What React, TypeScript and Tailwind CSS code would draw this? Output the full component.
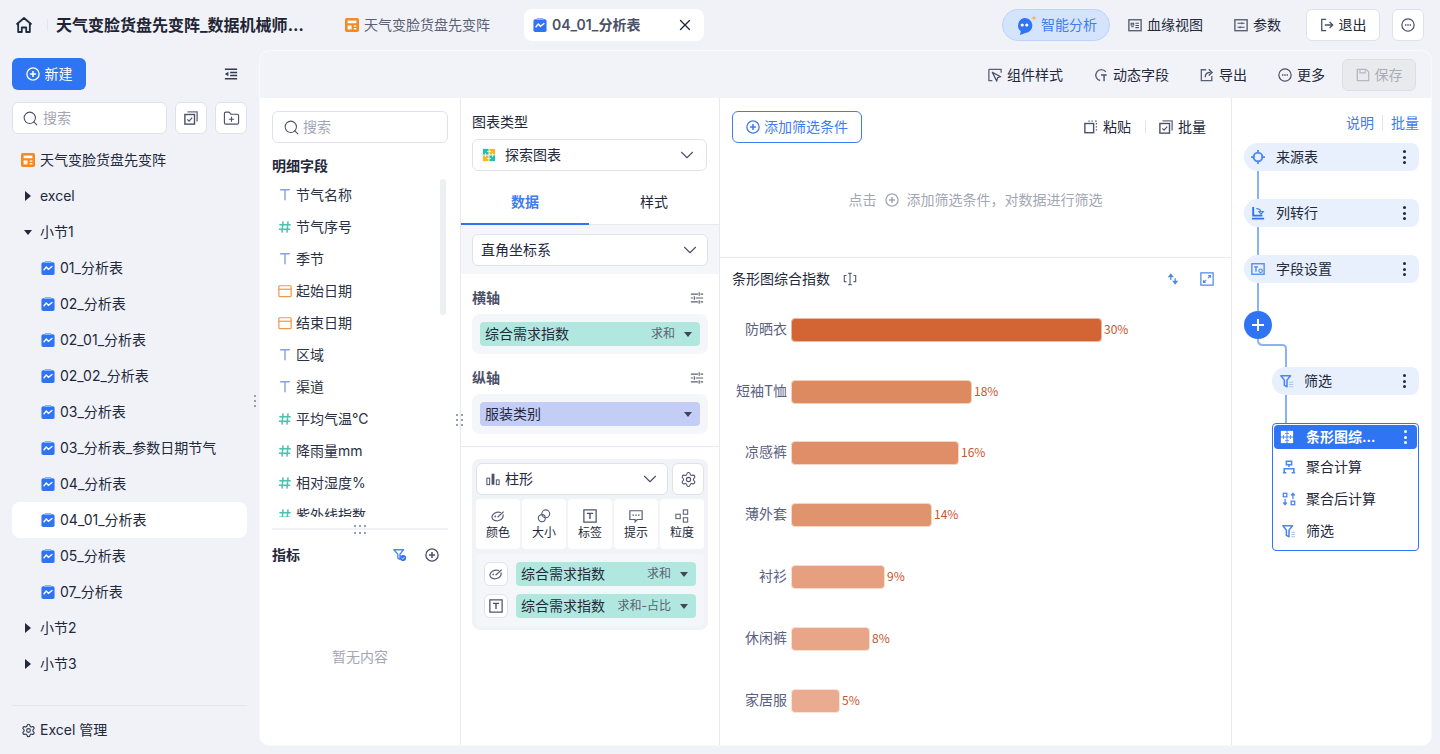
import type { ReactNode } from "react";
import { ChevronDown, FolderPlus, Search, Settings, X } from "lucide-react";

const GRAY = "#4b5168";
const BLUE = "#2f74f3";

function Ico({ size = 14, children }: { size?: number; children: ReactNode }) {
  return (
    <svg width={size} height={size} viewBox="0 0 16 16" fill="none" className="shrink-0">
      {children}
    </svg>
  );
}

function HomeIcon() {
  return (
    <svg width="18" height="18" viewBox="0 0 18 18" fill="none" className="shrink-0">
      <path d="M1.5 8.5 9 2l7.5 6.5M3.2 7.5V16h3.6v-4.5h4.4V16h3.6V7.5" stroke="#1f2a3d" strokeWidth="1.8" strokeLinejoin="round" />
    </svg>
  );
}

function BookIcon() {
  return (
    <Ico>
      <rect width="16" height="16" rx="2" fill="#f58a23" />
      <rect x="3" y="3" width="10" height="3" fill="#fff" />
      <rect x="3" y="8.500" width="4.500" height="4.500" fill="#fff" />
      <rect x="10" y="8.500" width="3" height="1.500" fill="#fff" />
      <rect x="10" y="11.500" width="3" height="1.500" fill="#fff" />
    </Ico>
  );
}

function SheetIcon() {
  return (
    <Ico>
      <rect x="0.5" y="1.5" width="15" height="14.5" rx="2" fill={BLUE} />
      <rect x="4" y="0" width="8" height="2.4" rx="1" fill="#8db4f8" />
      <path d="M3 10.5 6 7l2.5 2.5L13 6" stroke="#fff" strokeWidth="1.6" />
    </Ico>
  );
}

function CirclePlusIcon({ color = GRAY, size = 14 }: { color?: string; size?: number }) {
  return (
    <Ico size={size}>
      <circle cx="8" cy="8" r="7" stroke={color} strokeWidth="1.5" />
      <path d="M8 4.5v7M4.5 8h7" stroke={color} strokeWidth="1.8" />
    </Ico>
  );
}

function CircleMoreIcon() {
  return (
    <Ico>
      <circle cx="8" cy="8" r="7" stroke={GRAY} strokeWidth="1.4" />
      <path d="M4.6 8h1.6M7.2 8h1.6M9.8 8h1.6" stroke={GRAY} strokeWidth="1.6" />
    </Ico>
  );
}

function BatchIcon() {
  return (
    <Ico>
      <path d="M4 1h11v11" stroke="#6b7086" strokeWidth="1.6" />
      <rect x="1" y="4" width="11" height="11" stroke={GRAY} strokeWidth="1.6" />
      <path d="m3.8 9.5 2 2 3.6-4" stroke={GRAY} strokeWidth="1.3" />
    </Ico>
  );
}

function OutdentIcon() {
  return (
    <Ico>
      <path d="M1 2.5h14M7 6.2h8M7 9.8h8M1 13.5h14" stroke="#333b50" strokeWidth="1.8" />
      <path d="M1 8l4-2.6v5.2z" fill="#333b50" />
    </Ico>
  );
}

function TuneIcon() {
  return (
    <Ico>
      <path d="M1 3.5h8M12 3.5h3M1 8h2.500M6.500 8H15M1 12.500h8M12 12.500h3" stroke="#5b6074" strokeWidth="1.300" />
      <path d="M10.500 1.500v4M5 6v4M10.500 10.500v4" stroke="#5b6074" strokeWidth="1.300" />
    </Ico>
  );
}

function PanelIcon({ variant }: { variant: "lineage" | "param" }) {
  return (
    <Ico>
      <rect x="1" y="2" width="14" height="12.5" stroke="#5b6074" strokeWidth="1.6" />
      {variant === "lineage" ? (
        <path d="M3.5 6h3v2h-3zM3.5 10h3M8.5 6h4M8.5 8.5h4M8.5 11h4" stroke="#4b5168" strokeWidth="1.2" />
      ) : (
        <path d="M4 6h8M4 10.5h8M9 4.8v2.4M7 9.3v2.4" stroke="#4b5168" strokeWidth="1.2" />
      )}
    </Ico>
  );
}

function ExitIcon() {
  return (
    <Ico>
      <path d="M7 1.5H2v13h5" stroke={GRAY} strokeWidth="1.5" />
      <path d="M5.5 8h9M11 4.5 14.5 8 11 11.5" stroke={GRAY} strokeWidth="1.5" />
    </Ico>
  );
}

function StyleIcon() {
  return (
    <Ico>
      <path d="M1 1.5h14v4M1 1.5v13h4" stroke="#5b6074" strokeWidth="1.5" />
      <path d="M5 5l9.5 5-3.5 1-1 4z" stroke={GRAY} strokeWidth="1.4" strokeLinejoin="round" />
    </Ico>
  );
}

function DynamicIcon() {
  return (
    <Ico>
      <path d="M13.5 4.5A6.3 6.3 0 1 0 7 14.3" stroke="#5b6074" strokeWidth="1.6" />
      <path d="M8 8h6.5M11.5 8v7" stroke={GRAY} strokeWidth="1.6" />
    </Ico>
  );
}

function ExportIcon() {
  return (
    <Ico>
      <path d="M7 2H1.5v12.5h12V9" stroke="#5b6074" strokeWidth="1.5" />
      <path d="M6 10.5C6 7 8 5 12 5M10 1.5 13.8 5 10 8.5" stroke={GRAY} strokeWidth="1.5" />
    </Ico>
  );
}

function SaveIcon() {
  return (
    <Ico>
      <path d="M1.5 1.5h10l3 3v10h-13z" stroke="#b5b8c2" strokeWidth="1.5" />
      <path d="M4.5 1.5v4h6v-4" stroke="#b5b8c2" strokeWidth="1.3" />
    </Ico>
  );
}

function PasteIcon() {
  return (
    <Ico>
      <rect x="1" y="4" width="10" height="10.5" stroke={GRAY} strokeWidth="1.6" />
      <path d="M5 1.2h1.5M8.5 1.2H10M12.5 1.2h2M14.2 3.5v1.6M14.2 7v1.6M14.2 10.5v1.6" stroke="#5b6074" strokeWidth="1.5" />
    </Ico>
  );
}

function TextFieldIcon() {
  return (
    <Ico>
      <path d="M2.5 2h11M8 2v12" stroke="#84a3dc" strokeWidth="1.6" />
    </Ico>
  );
}

function NumFieldIcon() {
  return (
    <Ico>
      <path d="M5.8 1.5 4.5 14.5M11.5 1.5l-1.3 13M1.5 5.5h13M1 10.5h13" stroke="#4fbfae" strokeWidth="1.7" />
    </Ico>
  );
}

function DateFieldIcon() {
  return (
    <Ico>
      <rect x="1" y="2" width="14" height="12.5" rx="1" stroke="#f09a3e" strokeWidth="1.4" />
      <path d="M1 6h14" stroke="#f09a3e" strokeWidth="1.4" />
    </Ico>
  );
}

function FilterIcon({ color = "#4f86ee" }: { color?: string }) {
  return (
    <Ico>
      <path d="M1 2h11L8 7v7.5L5 13V7z" stroke={color} strokeWidth="1.8" strokeLinejoin="round" />
      <path d="M10.5 9.5h4.5M10.5 12h4.5M10.5 14.5h4.5" stroke="#a9c4f5" strokeWidth="1.2" />
    </Ico>
  );
}

function ExploreIcon({ white }: { white?: boolean }) {
  const a = white ? "#fff" : "#f5b62d";
  const b = white ? "#fff" : "#25bdb0";
  return (
    <Ico>
      <rect x="1" y="1" width="6.500" height="6.500" fill={b} />
      <rect x="8.500" y="1" width="6.500" height="6.500" fill={a} />
      <rect x="1" y="8.500" width="6.500" height="6.500" fill={a} />
      <rect x="8.500" y="8.500" width="6.500" height="6.500" fill={b} />
      <path d="M6 4h4M4 6v4M12 6v4M6 12h4" stroke={white ? BLUE : "#fff"} strokeWidth="1.100" strokeDasharray="1.500 1" />
    </Ico>
  );
}

function PaletteIcon() {
  return (
    <Ico>
      <ellipse cx="7.500" cy="8.500" rx="6.500" ry="4.800" transform="rotate(-15 7.500 8.500)" stroke="#5b6074" strokeWidth="1.400" />
      <path d="M7 10 15 3" stroke="#fff" strokeWidth="3" />
      <path d="M7.500 9.500 14.500 3" stroke="#5b6074" strokeWidth="1.400" />
      <circle cx="4.800" cy="8.500" r="1" fill="#5b6074" />
    </Ico>
  );
}

function SizeIcon() {
  return (
    <Ico>
      <circle cx="5.5" cy="10.5" r="4" stroke="#5b6074" strokeWidth="1.3" />
      <circle cx="10" cy="5.5" r="4.5" stroke="#5b6074" strokeWidth="1.3" />
    </Ico>
  );
}

function LabelIcon() {
  return (
    <Ico>
      <rect x="1" y="1" width="14" height="14" stroke={GRAY} strokeWidth="1.4" />
      <path d="M4.5 5h7M8 5v6.5" stroke={GRAY} strokeWidth="1.6" />
    </Ico>
  );
}

function TipIcon() {
  return (
    <Ico>
      <path d="M1 2h14v10H9.5L7 14.5V12H1z" stroke="#5b6074" strokeWidth="1.4" />
      <path d="M4 7h1.6M7.2 7h1.6M10.4 7H12" stroke={GRAY} strokeWidth="1.6" />
    </Ico>
  );
}

function GrainIcon() {
  return (
    <Ico>
      <rect x="1" y="6" width="5" height="5" stroke="#5b6074" strokeWidth="1.2" />
      <rect x="9.5" y="1" width="5" height="5" stroke="#5b6074" strokeWidth="1.2" />
      <rect x="9.5" y="10" width="5" height="5" stroke="#5b6074" strokeWidth="1.2" />
    </Ico>
  );
}

function BarsIcon() {
  return (
    <Ico>
      <rect x="1" y="7" width="3.2" height="7.5" stroke={GRAY} strokeWidth="1.1" />
      <rect x="6.4" y="2" width="3.2" height="12.5" fill={GRAY} />
      <rect x="11.8" y="9" width="3.2" height="5.5" stroke={GRAY} strokeWidth="1.1" />
    </Ico>
  );
}

function DragDots({ layout }: { layout: "single" | "double" | "row" }) {
  const count = layout === "single" ? 3 : 6;
  const cls =
    layout === "single"
      ? "grid grid-cols-1 gap-y-[3px]"
      : layout === "double"
        ? "grid grid-cols-2 gap-x-[3px] gap-y-[3px]"
        : "grid grid-cols-3 gap-x-[3px] gap-y-[5px]";
  return (
    <div className={cls}>
      {Array.from({ length: count }).map((_, i) => (
        <span key={i} className="size-[2px] bg-[#9a9fae]" />
      ))}
    </div>
  );
}

function Caret() {
  return <span className="w-0 h-0 border-x-4 border-x-transparent border-t-[5px] border-t-[#41465a] shrink-0" />;
}

function Kebab({ white }: { white?: boolean }) {
  return (
    <span className="flex flex-col gap-[2.5px] w-[3px] shrink-0">
      {[0, 1, 2].map((i) => (
        <span key={i} className={white ? "size-[3px] rounded-full bg-white" : "size-[3px] rounded-full bg-[#23283a]"} />
      ))}
    </span>
  );
}

function Select({ className, icon, label }: { className: string; icon?: ReactNode; label: string }) {
  return (
    <div className={"h-8 flex items-center bg-white border border-[#dfe2ea] rounded-md " + className}>
      {icon}
      <span className="flex-1 text-[#23283a]">{label}</span>
      <ChevronDown size={22} strokeWidth={1.2} className="text-[#4b5168]" />
    </div>
  );
}

function FieldPill({ tail, purple, className = "" }: { tail?: string; purple?: boolean; className?: string }) {
  return (
    <div className={(purple ? "bg-[#c3cdf6] " : "bg-[#b0e8e0] ") + "h-6 rounded flex items-center pl-[5px] pr-2 " + className}>
      <span className="flex-1 text-[#23283a]">{purple ? "服装类别" : "综合需求指数"}</span>
      {tail && <span className="text-xs text-[#5a6270] mr-[9px]">{tail}</span>}
      <Caret />
    </div>
  );
}

const treeLeaves = ["01_分析表", "02_分析表", "02_01_分析表", "02_02_分析表", "03_分析表", "03_分析表_参数日期节气", "04_分析表", "04_01_分析表", "05_分析表", "07_分析表"];

const fields: { name: string; kind: "t" | "n" | "d" }[] = [
  { name: "节气名称", kind: "t" },
  { name: "节气序号", kind: "n" },
  { name: "季节", kind: "t" },
  { name: "起始日期", kind: "d" },
  { name: "结束日期", kind: "d" },
  { name: "区域", kind: "t" },
  { name: "渠道", kind: "t" },
  { name: "平均气温℃", kind: "n" },
  { name: "降雨量mm", kind: "n" },
  { name: "相对湿度%", kind: "n" },
  { name: "紫外线指数", kind: "n" },
];

const bars = [
  { name: "防晒衣", pct: "30%", w: 311, color: "#d26533", edge: "#eab79f" },
  { name: "短袖T恤", pct: "18%", w: 181, color: "#dd8a60", edge: "#f3d0bd" },
  { name: "凉感裤", pct: "16%", w: 168, color: "#e08e67", edge: "#f5d4c3" },
  { name: "薄外套", pct: "14%", w: 141, color: "#e0946e", edge: "#f5d6c6" },
  { name: "衬衫", pct: "9%", w: 94, color: "#e6a07f", edge: "#f8dccd" },
  { name: "休闲裤", pct: "8%", w: 79, color: "#e8a588", edge: "#f9dfd2" },
  { name: "家居服", pct: "5%", w: 49, color: "#eaab90", edge: "#fae2d6" },
];

const encodings: { label: string; icon: ReactNode }[] = [
  { label: "颜色", icon: <PaletteIcon /> },
  { label: "大小", icon: <SizeIcon /> },
  { label: "标签", icon: <LabelIcon /> },
  { label: "提示", icon: <TipIcon /> },
  { label: "粒度", icon: <GrainIcon /> },
];

function Header() {
  return (
    <header className="h-[50px] flex items-center shrink-0">
      <div className="ml-[15px] w-[18px]"><HomeIcon /></div>
      <span className="ml-[14px] w-px h-3 bg-[#e4e6ee]" />
      <span className="ml-2 w-[252px] truncate text-base font-bold text-[#1f2435]">天气变脸货盘先变阵_数据机械师出品</span>
      <div className="ml-[37px] flex items-center gap-[5px] text-[#5b6074]">
        <BookIcon />
        <span>天气变脸货盘先变阵</span>
      </div>
      <div className="ml-[34px] w-[180px] h-8 bg-white rounded-lg flex items-center pl-[9px] gap-[5px]">
        <SheetIcon />
        <span className="flex-1 font-semibold text-[#4b5168]">04_01_分析表</span>
        <X size={18} strokeWidth={1.8} className="text-[#23283a] mr-[10px]" />
      </div>
      <div className="ml-[298px] w-[108px] h-8 rounded-full bg-[#d5e4fd] border border-[#bcd3fa] flex items-center pl-[14px] gap-1">
        <svg width="20" height="20" viewBox="0 0 20 20" className="shrink-0">
          <path d="M7.500 3a7.500 7.500 0 0 1 .8 15L3 20l.8-3.800A7.500 7.500 0 0 1 7.500 3z" fill={BLUE} />
          <circle cx="5.200" cy="10" r="1.600" fill="#fff" />
          <circle cx="9.800" cy="10" r="1.600" fill="#fff" />
          <path d="M17 0l.7 2.300L20 3l-2.300.7L17 6l-.7-2.300L14 3l2.300-.7z" fill="#f5b62d" />
        </svg>
        <span className="text-[#3f7cf0]">智能分析</span>
      </div>
      <div className="ml-[18px] flex items-center gap-[5px] text-[#23283a]"><PanelIcon variant="lineage" /><span>血缘视图</span></div>
      <div className="ml-[31px] flex items-center gap-[5px] text-[#23283a]"><PanelIcon variant="param" /><span>参数</span></div>
      <div className="ml-[25px] w-[74px] h-8 bg-white border border-[#dfe2ea] rounded-md flex items-center justify-center gap-[5px] text-[#23283a]"><ExitIcon /><span>退出</span></div>
      <div className="ml-3 size-8 bg-white border border-[#dfe2ea] rounded-md flex items-center justify-center"><CircleMoreIcon /></div>
    </header>
  );
}

function Sidebar() {
  return (
    <aside className="relative w-[259px] shrink-0 flex flex-col pt-2">
      <div className="flex items-center justify-between pl-3 pr-[21px]">
        <div className="w-[74px] h-8 rounded-md bg-[#2f74f3] text-white flex items-center justify-center gap-[5px]">
          <CirclePlusIcon color="#fff" />
          <span>新建</span>
        </div>
        <OutdentIcon />
      </div>
      <div className="mt-3 ml-3 flex gap-2">
        <div className="w-[155px] h-8 bg-white border border-[#dfe2ea] rounded-md flex items-center pl-[9px] gap-1 text-[#a3a7b4]">
          <Search size={17} strokeWidth={1.5} className="text-[#4b5168]" />
          <span>搜索</span>
        </div>
        <div className="size-8 bg-white border border-[#dfe2ea] rounded-md flex items-center justify-center"><BatchIcon /></div>
        <div className="size-8 bg-white border border-[#dfe2ea] rounded-md flex items-center justify-center"><FolderPlus size={17} strokeWidth={1.6} className="text-[#4b5168]" /></div>
      </div>
      <ul className="mt-2 text-[#23283a]">
        <li className="h-9 flex items-center pl-[21px] gap-[5px]"><BookIcon /><span>天气变脸货盘先变阵</span></li>
        <TreeGroup label="excel" />
        <TreeGroup label="小节1" open />
        {treeLeaves.map((name) => (
          <li key={name} className={(name === "04_01_分析表" ? "bg-white rounded-lg " : "") + "h-9 ml-3 w-[235px] flex items-center pl-[29px] gap-[5px]"}>
            <SheetIcon />
            <span>{name}</span>
          </li>
        ))}
        <TreeGroup label="小节2" />
        <TreeGroup label="小节3" />
      </ul>
      <div className="mt-auto mx-3 w-[235px] h-[49px] border-t border-[#e4e6ee] flex items-center pl-[9px] gap-1 text-[#23283a]">
        <Settings size={15} strokeWidth={1.8} className="text-[#333b50]" />
        <span>Excel 管理</span>
      </div>
      <div className="absolute right-[3px] top-[345px]"><DragDots layout="single" /></div>
    </aside>
  );
}

function TreeGroup({ label, open }: { label: string; open?: boolean }) {
  return (
    <li className="h-9 flex items-center text-[#23283a]">
      <span className={open ? "w-10 flex pl-6" : "w-10 flex pl-[25px]"}>
        {open ? (
          <span className="w-0 h-0 border-x-4 border-x-transparent border-t-[5px] border-t-[#23283a]" />
        ) : (
          <span className="w-0 h-0 border-y-[5px] border-y-transparent border-l-[6px] border-l-[#23283a]" />
        )}
      </span>
      <span>{label}</span>
    </li>
  );
}

function Toolbar() {
  return (
    <div className="h-[47px] bg-[#f2f3f9] flex items-center justify-end pr-[15px] text-[#23283a]">
      <div className="flex items-center gap-[5px]"><StyleIcon /><span>组件样式</span></div>
      <div className="ml-[31px] flex items-center gap-[5px]"><DynamicIcon /><span>动态字段</span></div>
      <div className="ml-[31px] flex items-center gap-[5px]"><ExportIcon /><span>导出</span></div>
      <div className="ml-[31px] flex items-center gap-[5px]"><CircleMoreIcon /><span>更多</span></div>
      <div className="ml-[17px] w-[74px] h-8 rounded-md bg-[#e9eaee] border border-[#dcdee4] flex items-center justify-center gap-[5px] text-[#a9acb7]"><SaveIcon /><span>保存</span></div>
    </div>
  );
}

function FieldsPanel() {
  return (
    <section className="relative w-[201px] shrink-0 border-r border-[#e8eaf0] pt-[13px] px-3">
      <div className="h-8 border border-[#dfe2ea] rounded-md flex items-center pl-[10px] gap-[3px] text-[#a3a7b4]">
        <Search size={17} strokeWidth={1.5} className="text-[#4b5168]" />
        <span>搜索</span>
      </div>
      <h3 className="mt-3 h-[22px] leading-[22px] font-bold text-[#23283a]">明细字段</h3>
      <div className="relative mt-[2px] h-[338px] overflow-hidden">
        {fields.map((f) => (
          <div key={f.name} className="h-8 flex items-center pl-[6px] gap-[4px] text-[#2b3044]">
            {f.kind === "t" && <TextFieldIcon />}
            {f.kind === "n" && <NumFieldIcon />}
            {f.kind === "d" && <DateFieldIcon />}
            <span>{f.name}</span>
          </div>
        ))}
        <span className="absolute right-[2px] top-0 w-[6px] h-[136px] rounded-full bg-[#eeeff2]" />
      </div>
      <div className="relative mt-[11px] h-[2px] bg-[#f0f1f4] flex justify-center">
        <div className="absolute -top-[3px]"><DragDots layout="row" /></div>
      </div>
      <div className="mt-[11px] h-7 flex items-center">
        <span className="font-bold text-[#23283a] flex-1">指标</span>
        <div className="mr-[9px] flex items-center gap-[18px]">
          <Ico>
            <path d="M1 2h11L8 7v6L5.5 11.5V7z" stroke="#4f86ee" strokeWidth="1.6" strokeLinejoin="round" />
            <circle cx="11.5" cy="11.5" r="3.5" fill={BLUE} />
            <path d="m9.800 11.500 1.200 1.200 2-2.200" stroke="#fff" strokeWidth="1" />
          </Ico>
          <CirclePlusIcon />
        </div>
      </div>
      <p className="mt-[78px] text-center text-[#a3a7b4]">暂无内容</p>
      <div className="absolute -right-[3px] top-[316px]"><DragDots layout="double" /></div>
    </section>
  );
}

function ConfigPanel() {
  return (
    <section className="w-[259px] shrink-0 border-r border-[#e8eaf0] pt-[13px]">
      <div className="px-[11px]">
        <h3 className="h-[22px] leading-[22px] text-[#23283a]">图表类型</h3>
        <Select
          className="mt-[6px] w-[235px] pl-[9px] pr-[8px]"
          icon={<span className="mr-[9px]"><ExploreIcon /></span>}
          label="探索图表"
        />
      </div>
      <div className="mt-[7px] h-[47px] flex border-b border-[#e8eaf0]">
        <div className="w-[128px] relative flex items-center justify-center pt-[2px] font-semibold text-[#3f7cf0]">
          数据
          <span className="absolute -bottom-px inset-x-0 h-[2px] bg-[#2f74f3]" />
        </div>
        <div className="flex-1 flex items-center justify-center pt-[2px] text-[#23283a]">样式</div>
      </div>
      <div className="h-[49px] bg-[#f5f6fa] pt-[9px] px-[11px]">
        <Select className="w-[236px] pl-2 pr-[6px]" label="直角坐标系" />
      </div>
      <div className="px-[11px] pt-[13px]">
        <div className="h-[22px] flex items-center justify-between pr-[4px]"><span className="font-semibold text-[#4b5168]">横轴</span><TuneIcon /></div>
        <div className="mt-[5px] h-10 w-[236px] p-2 rounded-lg bg-[#f5f6f9]"><FieldPill tail="求和" /></div>
        <div className="mt-[13px] h-[22px] flex items-center justify-between pr-[4px]"><span className="font-semibold text-[#4b5168]">纵轴</span><TuneIcon /></div>
        <div className="mt-[5px] h-10 w-[236px] p-2 rounded-lg bg-[#f5f6f9]"><FieldPill purple /></div>
      </div>
      <div className="mt-3 h-px bg-[#e8eaf0]" />
      <div className="mt-3 mx-[11px] w-[236px] h-[171px] p-1 rounded-lg bg-[#f1f3f6]">
        <div className="flex gap-1">
          <Select
            className="w-[192px] pl-[9px] pr-[6px]"
            icon={<span className="mr-[5px]"><BarsIcon /></span>}
            label="柱形"
          />
          <div className="size-8 bg-white border border-[#dfe2ea] rounded-md flex items-center justify-center"><Settings size={17} strokeWidth={1.5} className="text-[#4b5168]" /></div>
        </div>
        <div className="mt-1 flex gap-[2px]">
          {encodings.map((e) => (
            <div key={e.label} className="w-11 h-[50px] bg-white rounded flex flex-col items-center justify-center gap-[2px] pt-[2px] text-xs text-[#23283a]">
              {e.icon}
              <span>{e.label}</span>
            </div>
          ))}
        </div>
        <div className="mt-[5px] h-[72px] rounded bg-[#f5f6f9] pl-2 pr-2 pt-2 flex flex-col gap-2">
          <div className="flex items-center gap-2">
            <div className="size-6 bg-white border border-[#dfe2ea] rounded-md flex items-center justify-center"><PaletteIcon /></div>
            <FieldPill tail="求和" className="flex-1" />
          </div>
          <div className="flex items-center gap-2">
            <div className="size-6 bg-white border border-[#dfe2ea] rounded-md flex items-center justify-center"><LabelIcon /></div>
            <FieldPill tail="求和-占比" className="flex-1" />
          </div>
        </div>
      </div>
    </section>
  );
}

function ChartPanel() {
  return (
    <section className="w-[512px] shrink-0 border-r border-[#e8eaf0] flex flex-col">
      <div className="h-[160px] border-b border-[#e8eaf0] pt-[13px] px-3">
        <div className="flex items-center">
          <div className="w-[130px] h-8 border border-[#3f7cf0] rounded-md flex items-center justify-center gap-1 text-[#3f7cf0]">
            <CirclePlusIcon color="#3f7cf0" />
            <span>添加筛选条件</span>
          </div>
          <div className="ml-auto mr-[13px] flex items-center text-[#23283a]">
            <PasteIcon />
            <span className="ml-[5px]">粘贴</span>
            <span className="ml-[14px] mr-[13px] w-px h-3 bg-[#e4e6ee]" />
            <BatchIcon />
            <span className="ml-[5px]">批量</span>
          </div>
        </div>
        <div className="mt-[47px] flex items-center justify-center gap-2 text-[#a3a7b4]">
          <span>点击</span>
          <CirclePlusIcon color="#a3a7b4" />
          <span>{"添加筛选条件\uFF0C对数据进行筛选"}</span>
        </div>
      </div>
      <div className="h-[41px] flex items-center px-3 text-[#23283a]">
        <span>条形图综合指数</span>
        <span className="ml-[13px]">
          <Ico>
            <path d="M4 4H1.5v7H4M12 4h2.5v7H12M6 1.5h4M6 14.5h4M8 1.5v13" stroke="#5b6074" strokeWidth="1.3" />
          </Ico>
        </span>
        <span className="ml-auto">
          <Ico>
            <path d="M5.5 1.5 9 6H2zM10.5 14.5 7 10h7z" fill="#4f86ee" />
            <path d="M5.5 5v4M10.5 11V7" stroke="#4f86ee" strokeWidth="1.4" />
          </Ico>
        </span>
        <span className="ml-5 mr-[5px]">
          <Ico>
            <rect x="1" y="1" width="14" height="14" stroke="#4f86ee" strokeWidth="1.4" />
            <path d="M4 12 7 9M9 7l3-3M4 9.5V12h2.5M9.5 4H12v2.5" stroke="#4f86ee" strokeWidth="1.3" />
          </Ico>
        </span>
      </div>
      <div className="flex flex-col">
        {bars.map((b) => (
          <div key={b.name} className="h-[61.8px] flex items-center">
            <span className="w-[67px] pb-[2px] text-right text-[#5b6080]">{b.name}</span>
            <span
              className="ml-[4px] h-6 rounded-[4px] border"
              style={{ width: b.w, backgroundColor: b.color, borderColor: b.edge }}
            />
            <span className="ml-[2px] pb-[2px] text-xs text-[#c8552b] font-['Noto_Sans_CJK_SC',sans-serif]">{b.pct}</span>
          </div>
        ))}
      </div>
    </section>
  );
}

function FlowNode({ icon, label, className }: { icon: ReactNode; label: string; className: string }) {
  return (
    <div className={"h-7 rounded-l-[14px] rounded-r-lg bg-[#e8f0fd] flex items-center pr-[13px] text-[#23283a] " + className}>
      {icon}
      <span className="flex-1">{label}</span>
      <Kebab />
    </div>
  );
}

function PipelinePanel() {
  return (
    <section className="flex-1 pt-[14px] pl-3">
      <div className="w-[175px] h-[22px] flex items-center justify-end text-[#3f7cf0]">
        <span>说明</span>
        <span className="mx-2 w-px h-4 bg-[#e4e6ee]" />
        <span>批量</span>
      </div>
      <div className="mt-[9px] w-[175px] flex flex-col">
        <FlowNode
          className="pl-[7px] gap-[11px]"
          label="来源表"
          icon={
            <Ico>
              <circle cx="8" cy="8" r="5" stroke="#4f86ee" strokeWidth="2.200" />
              <path d="M8 0v4M8 12v4M0 8h4M12 8h4" stroke="#4f86ee" strokeWidth="2" />
            </Ico>
          }
        />
        <span className="ml-[13px] w-[2px] h-7 bg-[#8ab2f8]" />
        <FlowNode
          className="pl-[7px] gap-[11px]"
          label="列转行"
          icon={
            <Ico>
              <path d="M2.5 1v10H13" stroke={BLUE} strokeWidth="2.2" />
              <path d="M1 14.5h14" stroke={BLUE} strokeWidth="2" />
              <path d="M6 3c3 0 5 1 5.5 4M9 6.5h5l-2.500 3z" stroke="#4f86ee" strokeWidth="1.4" />
            </Ico>
          }
        />
        <span className="ml-[13px] w-[2px] h-7 bg-[#8ab2f8]" />
        <FlowNode
          className="pl-[7px] gap-[11px]"
          label="字段设置"
          icon={
            <Ico>
              <rect x="1" y="2" width="14" height="12" stroke="#4f86ee" strokeWidth="1.5" />
              <path d="M3.500 5.500H8M5.700 5.500V11" stroke="#4f86ee" strokeWidth="1.5" />
              <circle cx="11" cy="10" r="2" stroke="#4f86ee" strokeWidth="1.3" />
            </Ico>
          }
        />
        <span className="ml-[13px] w-[2px] h-7 bg-[#8ab2f8]" />
        <div className="size-7 rounded-full bg-[#2f74f3] flex items-center justify-center">
          <svg width="14" height="14" viewBox="0 0 14 14"><path d="M7 1v12M1 7h12" stroke="#fff" strokeWidth="2" /></svg>
        </div>
        <svg width="44" height="28" viewBox="0 0 44 28" fill="none">
          <path d="M14 0v1q0 5 5 5h19q4 0 4 4v18" stroke="#8ab2f8" strokeWidth="2" />
        </svg>
        <FlowNode className="ml-7 pl-2 gap-[10px]" label="筛选" icon={<FilterIcon />} />
        <span className="ml-[41px] w-[2px] h-7 bg-[#8ab2f8]" />
        <div className="ml-7 h-[128px] border border-[#2f74f3] rounded p-px">
          <div className="h-6 rounded bg-[#2f74f3] flex items-center pl-[6px] pr-[10px] text-white">
            <ExploreIcon white />
            <span className="ml-[12px] w-[70px] truncate font-semibold">条形图综合指数</span>
            <span className="ml-auto"><Kebab white /></span>
          </div>
          <div className="mt-[2px]">
            <PipeRow label="聚合计算" icon={<Ico><path d="M5 1.500h6v4H5zM8 5.500V8M2.500 14.500V10h11v4.500M1 14.500h4M11 14.500h4" stroke="#4f86ee" strokeWidth="1.8" /></Ico>} />
            <PipeRow label="聚合后计算" icon={<Ico><rect x="1.500" y="1.500" width="4" height="4" stroke="#4f86ee" strokeWidth="1.5" /><rect x="10.500" y="10.500" width="4" height="4" stroke="#4f86ee" strokeWidth="1.5" /><path d="M3.500 8v6M1.500 12l2 2.500 2-2.500M12.500 8V2M10.500 4l2-2.500 2 2.500" stroke="#4f86ee" strokeWidth="1.500" /></Ico>} />
            <PipeRow label="筛选" icon={<FilterIcon />} />
          </div>
        </div>
      </div>
    </section>
  );
}

function PipeRow({ icon, label }: { icon: ReactNode; label: string }) {
  return (
    <div className="h-8 flex items-center pl-[8px] gap-[10px] text-[#23283a]">
      {icon}
      <span>{label}</span>
    </div>
  );
}

export default function App() {
  return (
    <div className="w-[1440px] h-[754px] overflow-hidden bg-[#f0f2f8] flex flex-col text-sm font-['Inter','Noto_Sans_CJK_SC',sans-serif]">
      <Header />
      <div className="flex-1 flex min-h-0">
        <Sidebar />
        <main className="w-[1173px] h-[696px] bg-white rounded-[10px] border border-[#f8f9fc] overflow-hidden flex flex-col">
          <Toolbar />
          <div className="flex-1 flex min-h-0">
            <FieldsPanel />
            <ConfigPanel />
            <ChartPanel />
            <PipelinePanel />
          </div>
        </main>
      </div>
    </div>
  );
}
